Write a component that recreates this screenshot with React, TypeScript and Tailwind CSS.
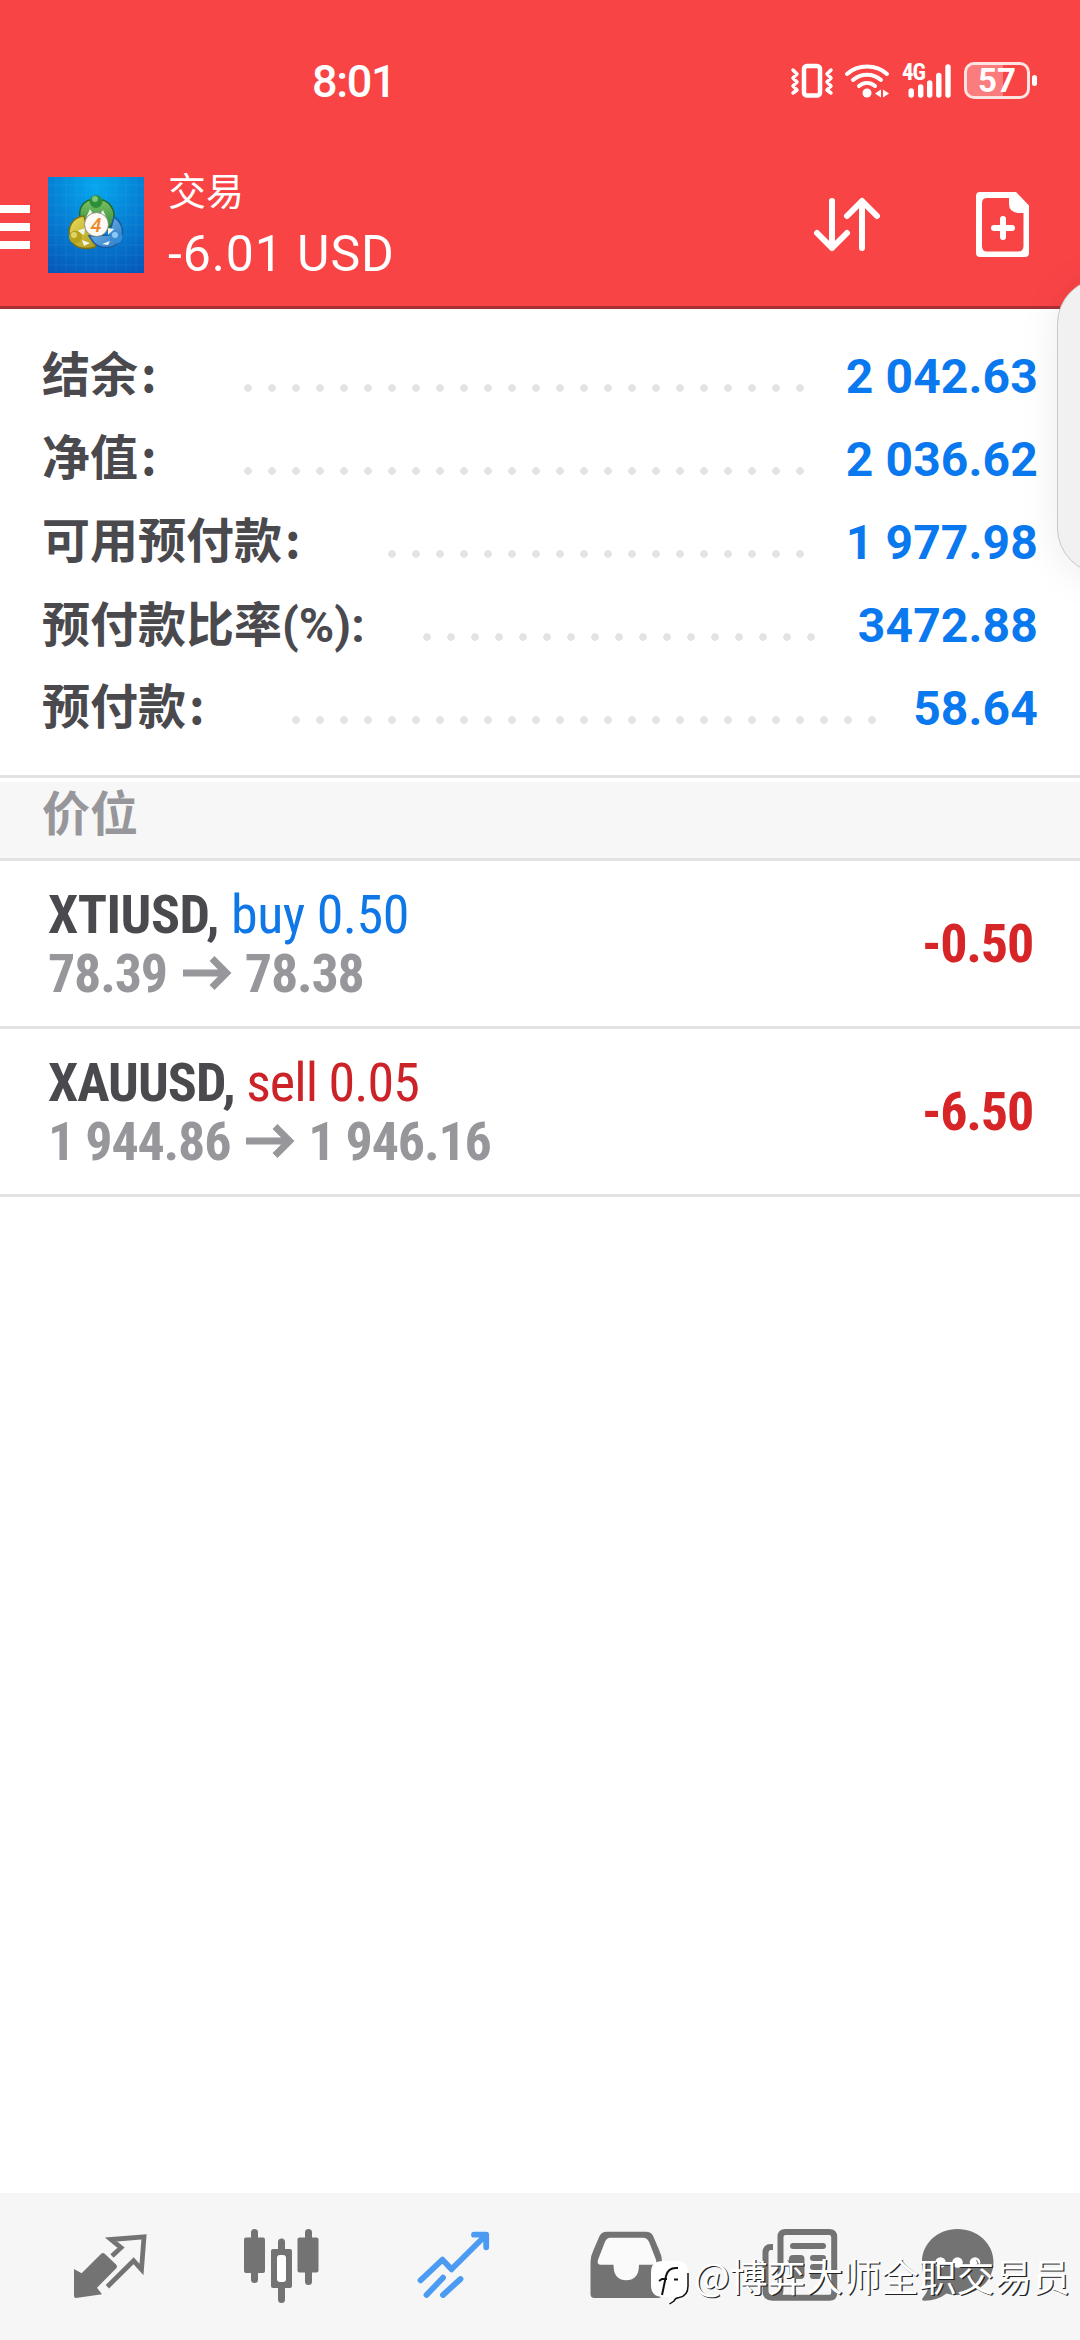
import type { ReactNode } from "react";

type Summary = { label: string; value: string; labelClass: string; colonClass: string; dotsClass: string };

const summary: Summary[] = [
  { label: "结余", value: "2 042.63", labelClass: "mb-[6px] w-[202px]", colonClass: "ml-[3px] font-['Noto_Sans_CJK_SC',sans-serif]", dotsClass: "w-[576px]" },
  { label: "净值", value: "2 036.62", labelClass: "mb-[6px] w-[202px]", colonClass: "ml-[3px] font-['Noto_Sans_CJK_SC',sans-serif]", dotsClass: "w-[576px]" },
  { label: "可用预付款", value: "1 977.98", labelClass: "mb-[6px] w-[346px]", colonClass: "ml-[3px] font-['Noto_Sans_CJK_SC',sans-serif]", dotsClass: "w-[432px]" },
  { label: "预付款比率(%)", value: "3472.88", labelClass: "w-[381px]", colonClass: "", dotsClass: "w-[408px]" },
  { label: "预付款", value: "58.64", labelClass: "mb-[6px] w-[250px]", colonClass: "ml-[3px] font-['Noto_Sans_CJK_SC',sans-serif]", dotsClass: "w-[600px]" },
];

const positions = [
  { symbol: "XTIUSD", side: "buy", volume: "0.50", open: "78.39", current: "78.38", profit: "-0.50" },
  { symbol: "XAUUSD", side: "sell", volume: "0.05", open: "1 944.86", current: "1 946.16", profit: "-6.50" },
];

function StatusBar() {
  return (
    <div className="flex h-[136px] items-start text-white">
      <span className="ml-[312px] mt-[56px] w-[477px] text-[45px] leading-[52px] font-medium [letter-spacing:-1.300px]">8:01</span>
      {/* vibrate */}
      <svg className="mt-[60px] h-[40px] w-[46px]" viewBox="0 0 46 40" fill="none" stroke="currentColor">
        <rect x="15" y="6" width="16" height="29.500" rx="3" strokeWidth="4.500" />
        <path d="M4 10l4 4-4 4 4 4-4 4 4 4-4 3M42 10l-4 4 4 4-4 4 4 4-4 4 4 3" strokeWidth="3.500" strokeLinecap="round" strokeLinejoin="round" />
      </svg>
      {/* wifi */}
      <svg className="ml-[8px] mt-[60px] h-[40px] w-[50px]" viewBox="0 0 50 40" fill="none" stroke="currentColor">
        <path d="M4 14c11-10 29-10 40 0M10 20c8-7 20-7 28 0M16 26c5-4 11-4 16 0" strokeWidth="4" strokeLinecap="round" />
        <circle cx="24" cy="33" r="4.500" fill="currentColor" stroke="none" />
        <path d="M38 29.500v8l-6-4zM40 29.500v8l6-4z" fill="currentColor" stroke="none" />
      </svg>
      {/* mobile signal */}
      <div className="relative ml-[7px] mt-[60px] h-[40px] w-[52px]">
        <span className="absolute -top-px left-[2px] text-[23px] leading-[27px] font-bold [font-stretch:85%] [letter-spacing:-1px]">4G</span>
        <svg className="h-[40px] w-[52px]" viewBox="0 0 52 40" stroke="currentColor" strokeWidth="5.400" strokeLinecap="round">
          <path d="M11.200 31v4M20.700 27v8M29.700 23v12M38.800 15.500V35M48 7v28" />
        </svg>
      </div>
      {/* battery */}
      <div className="ml-[12px] mt-[62px] flex items-center">
        <div className="relative flex h-[37px] w-[66px] items-center justify-center overflow-hidden rounded-[10px] border-[3px] border-white/85">
          <div className="absolute inset-y-0 left-0 w-[36px] bg-white/30" />
          <span className="relative text-[33px] leading-none font-bold [font-stretch:88%]">57</span>
        </div>
        <div className="ml-[2px] h-[11px] w-[5px] rounded-full bg-white" />
      </div>
    </div>
  );
}

function Logo() {
  return (
    <svg className="ml-[18px] size-[96px]" viewBox="0 0 96 96">
      <defs>
        <radialGradient id="sky" cx=".5" cy=".1" r="1">
          <stop offset="0" stopColor="#05a7ef" />
          <stop offset="1" stopColor="#0657b8" />
        </radialGradient>
        <linearGradient id="green" x2="0" y2="1">
          <stop stopColor="#7fc266" />
          <stop offset="1" stopColor="#2d8a35" />
        </linearGradient>
        <linearGradient id="yellow" x2="1" y2="1">
          <stop stopColor="#ece05a" />
          <stop offset="1" stopColor="#a89316" />
        </linearGradient>
        <linearGradient id="blue" x2="1" y2="1">
          <stop stopColor="#7cc1f0" />
          <stop offset="1" stopColor="#2c78c6" />
        </linearGradient>
      </defs>
      <rect width="96" height="96" fill="url(#sky)" />
      <path d="M8 0v96M18 0v96M28 0v96M38 0v96M48 0v96M58 0v96M68 0v96M78 0v96M88 0v96M0 8h96M0 18h96M0 28h96M0 38h96M0 48h96M0 58h96M0 68h96M0 78h96M0 88h96" stroke="#6cc5f5" strokeOpacity=".16" strokeWidth=".7" />
      <g strokeWidth="1.500">
        <path d="M34 46C28 34 34 22 48 22s21 12 17 24l-6 7-22-5z" fill="url(#green)" stroke="#1f6b2c" />
        <path d="M36 39c-12 1-17 12-14 22 3 9 13 13 25 9l5-9-14-14z" fill="url(#yellow)" stroke="#7d7012" />
        <path d="M66 40c8 5 11 15 6 23-5 9-18 10-26 3l-5-7 20-1z" fill="url(#blue)" stroke="#1c5a9e" />
      </g>
      <path d="M42 32l-4 9 7-4zM55 33l4 9-7-5zM29 54l8-3-1 7zM66 52l-6-1 0 7zM34 63l8 3-6 3zM62 64l-8 3 6 1z" fill="#eef7e9" />
      <circle cx="48" cy="24.500" r="6.500" fill="#2f8f39" />
      <circle cx="47" cy="22" r="3" fill="#7ec47b" />
      <circle cx="27.500" cy="60" r="6.500" fill="#b7a21c" />
      <circle cx="26" cy="58" r="3" fill="#e0d36a" />
      <circle cx="68" cy="60" r="6.500" fill="#3a8bd6" />
      <circle cx="67" cy="58" r="3" fill="#8ccaf5" />
      <circle cx="48.500" cy="47.500" r="12" fill="#fbfaf5" stroke="#777" strokeWidth=".8" />
      <text x="48" y="55" textAnchor="middle" fontFamily="Roboto" fontSize="20" fontWeight="500" fontStyle="italic" fill="#ee8a2d">4</text>
    </svg>
  );
}

function Toolbar() {
  return (
    <div className="flex h-[170px] pt-[41px] text-white">
      <div className="mt-[28px] flex w-[30px] flex-col gap-[10px]">
        <div className="h-2 bg-white" />
        <div className="h-2 bg-white" />
        <div className="h-2 bg-white" />
      </div>
      <Logo />
      <div className="ml-[24px] flex flex-col">
        <span className="-mt-[5px] text-[38px] leading-[40px]">交易</span>
        <span className="mt-[12px] text-[50px] leading-[60px] [letter-spacing:0.900px]">-6.01 USD</span>
      </div>
      <svg className="ml-auto mt-[20px] h-[56px] w-[68px]" viewBox="0 0 68 56" fill="none" stroke="currentColor" strokeWidth="6" strokeLinecap="round" strokeLinejoin="round">
        <path d="M19 4v47M4 36l15 15 15-15M49 51V4M34 19L49 4l15 15" />
      </svg>
      <svg className="ml-[94px] mr-[50px] mt-[14px] h-[67px] w-[55px]" viewBox="0 0 55 67">
        <path fill="currentColor" fillRule="evenodd" d="M5 1h36l13 13.500V62q0 4-4 4H5q-4 0-4-4V5q0-4 4-4zM12 7q-5 0-5 5v43q0 5.500 5 5.500h31q5.500 0 5.500-5.500V22H43q-9-1-9-9V7z" />
        <path d="M28 28v18M19 37h18" stroke="currentColor" strokeWidth="6" strokeLinecap="round" />
      </svg>
    </div>
  );
}

function SummaryRow({ label, value, labelClass, colonClass, dotsClass }: Summary) {
  return (
    <div className="flex h-[83px] items-center pr-[42px] pl-[42px] font-bold">
      <div className={`${labelClass} flex shrink-0 items-baseline text-[48px] leading-[48px] whitespace-nowrap text-[#4a494e]`}>
        <span>{label}</span>
        <span className={`${colonClass} h-[48px]`}>:</span>
      </div>
      <div className={`${dotsClass} mt-[22px] h-2 shrink-0 bg-[radial-gradient(circle_at_4px_4px,#e3e3e3_3.500px,transparent_4px)] bg-[size:24px_8px]`} />
      <span className="ml-auto text-[48px] leading-none whitespace-nowrap text-[#0a78ee] [letter-spacing:0.150px]">{value}</span>
    </div>
  );
}

function PositionRow({ p }: { p: (typeof positions)[number] }) {
  return (
    <div className="flex h-[168px] items-center justify-between border-b-[3px] border-[#e3e3e3] pr-[47px] pl-[48px] text-[54px] [font-stretch:75%]">
      <div className="leading-[59px]">
        <div className={p.side === "buy" ? "[letter-spacing:-0.500px]" : "[letter-spacing:-0.950px]"}>
          <span className="font-bold text-[#4a494e]">{p.symbol}, </span>
          <span className={p.side === "buy" ? "text-[#1078e6]" : "text-[#cb2327]"}>
            {p.side} {p.volume}
          </span>
        </div>
        <div className="flex items-center font-bold text-[#97979b] [letter-spacing:-1.200px]">
          {p.open}
          <svg className="mr-[13px] ml-[15px] h-[34px] w-[50px]" viewBox="0 0 50 34" fill="none" stroke="currentColor" strokeWidth="7">
            <path d="M1 17h43M30 2.500L44.500 17 30 31.500" />
          </svg>
          {p.current}
        </div>
      </div>
      <span className="font-bold text-[#d62427] [letter-spacing:-1.200px]">{p.profit}</span>
    </div>
  );
}

function Tab({ children, active }: { children: ReactNode; active?: boolean }) {
  return (
    <svg className={`h-[147px] w-[172px] ${active ? "text-[#4c9bf2]" : "text-[#737373]"}`} viewBox="0 0 172 147" fill="currentColor">
      {children}
    </svg>
  );
}

function TabBar() {
  return (
    <nav className="mt-auto flex h-[147px] bg-[#f6f6f6] pl-[24px]">
      <Tab>
        <path d="M50 76l7.600 4.300L77 61q2-2 4 0l11 10.500q2 2 0 4L73 94.700l5 6.600-26 3.700q-2 0-2-2z" />
        <path d="M88 63l9-8.300-10-8.200 33-2.600-2.500 32.600-7.900-8.800-26.200 26" fill="none" stroke="currentColor" strokeWidth="4.800" />
      </Tab>
      <Tab>
        <rect x="48" y="44.500" width="21" height="35.500" rx="2" />
        <rect x="55" y="36" width="7" height="54" rx="3.500" />
        <rect x="101.500" y="44.500" width="21" height="35" rx="2" />
        <rect x="109" y="36" width="7" height="56" rx="3.500" />
        <rect x="82" y="45.500" width="7" height="64.500" rx="3.500" />
        <rect x="75" y="56" width="21" height="39" rx="2" />
        <rect x="81" y="62" width="9" height="27" rx="3" fill="#fff" />
      </Tab>
      <Tab active>
        <g fill="none" stroke="currentColor" strokeWidth="5.800" strokeLinecap="round" strokeLinejoin="round">
          <path d="M52.500 87.300l22-20.600 9 9.600L116 44M106 41.700h12.200v12.600" />
          <path d="M75 84.700L58.500 102M92.500 86L75 102" />
        </g>
      </Tab>
      <Tab>
        <path d="M67 38.700h39q5 0 7 4l6 14q3 6 3 12V101q0 4-4 4H54.500q-4 0-4-4V69q0-6 3-12l6-14q2-4.300 7.500-4.300z" />
        <path d="M70 44.700h33q4 0 6 4l7 18q1.500 5-4 5H99q0 15.500-12.800 15.500T73.500 71.700H61q-4.500 0-3-5l7-18q2-4 5-4z" fill="#fafafa" />
      </Tab>
      <Tab>
        <path d="M61 54h-2q-5.500 0-5.500 6v38q0 6.700 7 6.700h57q4.700 0 4.700-4.700V44q0-5-5-5H73.500q-5 0-5 5v52q0 8.700-7.500 8.700" fill="none" stroke="currentColor" strokeWidth="6" />
        <rect x="78" y="50" width="36" height="6" rx="3" />
        <rect x="77" y="62" width="15.500" height="24" rx="4" />
        <rect x="98" y="62" width="16" height="6" rx="3" />
        <rect x="98" y="71" width="16" height="6" rx="3" />
        <rect x="98" y="80" width="16" height="6" rx="3" />
      </Tab>
      <Tab>
        <path d="M73.500 36c20 0 36 14.500 36 33s-16 33-36 33q-6 0-11-1.500-9 7-22 7.200-3.500 0-2-2.500 5-6 6-11.500-6.500-9-6.500-24.700c0-18.500 15.500-33 35.500-33z" />
        <circle cx="56.500" cy="69.500" r="5.300" fill="#fff" />
        <circle cx="73.500" cy="69.500" r="5.300" fill="#fff" />
        <circle cx="91" cy="69.500" r="5.300" fill="#fff" />
      </Tab>
    </nav>
  );
}

function Watermark() {
  return (
    <div className="absolute top-[2252px] left-[650px] flex items-start whitespace-nowrap">
      <svg className="mt-[7px] h-[46px] w-[41px]" viewBox="0 0 41 46">
        <path d="M13 2h14q11 0 11 11v13q0 11-9 12-2 1-3 4l-6 2-1-6h-6Q1 38 1 26V13Q1 2 13 2z" fill="#fff" />
        <path d="M38 14v13q0 10-9 11.500-4 .5-5 3.500l-4.500 3" fill="none" stroke="#111" strokeWidth="1.500" />
        <path d="M28 9q-10-1-12 8l-4 19M9 22l3-2h5M24 20.500h4" fill="none" stroke="#111" strokeWidth="2" />
      </svg>
      <span className="ml-[3px] font-['Noto_Sans_CJK_SC',sans-serif] text-[37.800px] leading-[46px] text-white [text-shadow:1.300px_1.300px_0_#222]">@博弈大师全职交易员</span>
    </div>
  );
}

export default function App() {
  return (
    <div className="relative flex h-[2340px] w-[1080px] flex-col overflow-hidden bg-white font-['Roboto','Noto_Sans_CJK_SC',sans-serif]">
      <header className="border-b-[3px] border-[#a93034] bg-[#f94446]">
        <StatusBar />
        <Toolbar />
      </header>

      <section className="h-[469px] border-b-[3px] border-[#e3e3e3] pt-[26px]">
        {summary.map((row) => (
          <SummaryRow key={row.label} {...row} />
        ))}
      </section>

      <div className="mt-[4px] h-[79px] border-b-[3px] border-[#e3e3e3] bg-[#f7f7f7] pt-[7px] pl-[42px] text-[48px] leading-[52px] font-bold text-[#97979b]">价位</div>

      {positions.map((p) => (
        <PositionRow key={p.symbol} p={p} />
      ))}

      <TabBar />

      {/* edge panel handle */}
      <div className="absolute top-[278px] left-[1057px] h-[296px] w-[100px] rounded-[46px] border border-[#c8c8c8] bg-[#f1f1f1] shadow-[0_4px_40px_rgba(0,0,0,0.08)]" />
      <Watermark />
    </div>
  );
}
